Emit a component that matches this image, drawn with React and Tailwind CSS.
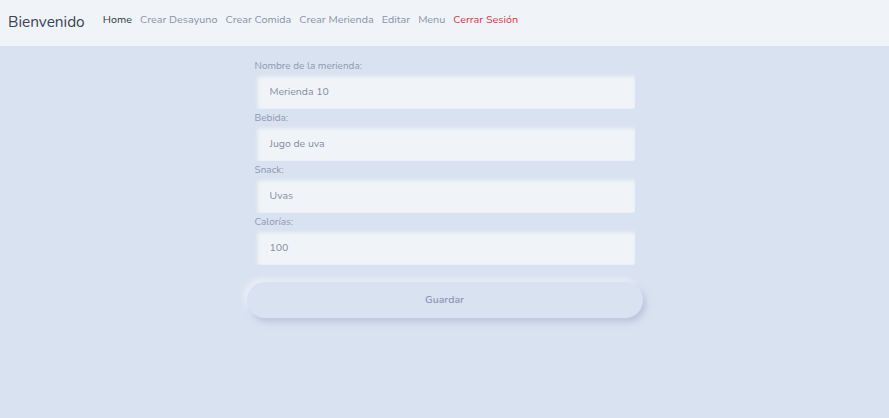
import React from 'react';

const fields = [
  { label: 'Nombre de la merienda:', value: 'Merienda 10' },
  { label: 'Bebida:', value: 'Jugo de uva' },
  { label: 'Snack:', value: 'Uvas' },
  { label: 'Calorías:', value: '100' },
];

export default function App() {
  return (
    <div className="min-h-screen w-full bg-[#d9e2f0] font-['Nunito','Lato','Noto_Sans',sans-serif]">
      {/* Navbar */}
      <nav className="h-[46px] bg-[#f0f4f9] flex items-center px-2">
        <span className="text-[15.4px] text-[#3b4256] mr-[18px] -mt-[2px]">Bienvenido</span>
        <div className="flex items-center gap-[8px] text-[10.8px] -mt-[6px]">
          <a className="text-[#2f3545]">Home</a>
          <a className="text-[#8a92a8]">Crear Desayuno</a>
          <a className="text-[#8a92a8]">Crear Comida</a>
          <a className="text-[#8a92a8]">Crear Merienda</a>
          <a className="text-[#8a92a8]">Editar</a>
          <a className="text-[#8a92a8]">Menu</a>
          <a className="text-[#dc3348]">Cerrar Sesión</a>
        </div>
      </nav>

      {/* Form */}
      <div className="flex justify-center pt-[13px]">
        <form className="w-[396px] flex flex-col">
          <div className="px-[8px] flex flex-col">
            {fields.map((f) => (
              <div key={f.label} className="flex flex-col mb-[2px]">
                <label className="text-[10px] leading-[14px] text-[#8f98b0] mb-[1px]">{f.label}</label>
                <div className="h-[35px] rounded-[3px] bg-[#f0f4f9] shadow-[inset_2px_2px_4px_rgba(180,192,215,0.4)] flex items-center pl-[15px] text-[10.5px] text-[#858c9e]">
                  {f.value}
                </div>
              </div>
            ))}
          </div>
          <button
            type="button"
            className="mt-[15px] h-[36px] w-full rounded-full bg-[#d9e2f0] text-[10.5px] font-semibold text-[#8a96b5] shadow-[3px_4px_6px_rgba(160,175,205,0.55),-3px_-3px_6px_rgba(240,245,252,0.8)]"
          >
            Guardar
          </button>
        </form>
      </div>
    </div>
  );
}
